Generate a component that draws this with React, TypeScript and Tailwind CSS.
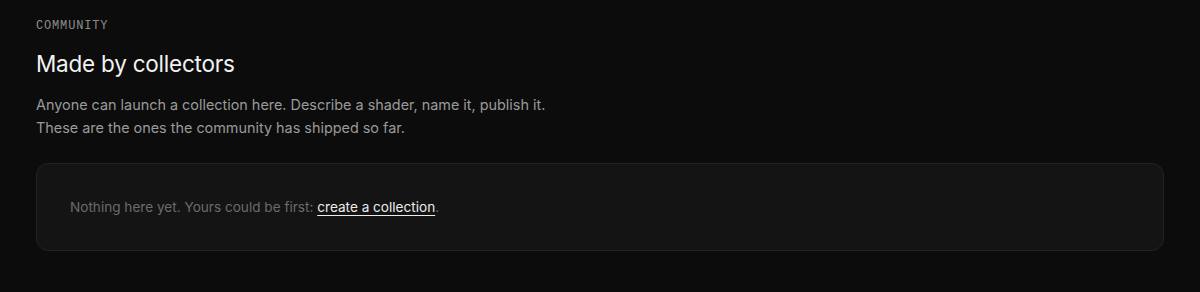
import React from 'react';

function App() {
  return (
    <div className="min-h-[292px] w-full bg-[#0c0c0c] px-9 pt-[20px] pb-10" style={{ fontFamily: 'Inter, "Noto Sans", sans-serif' }}>
      <p className="text-[12px] leading-[13px] tracking-[0.07em] text-[#8c8c8c]" style={{ fontFamily: '"Liberation Mono", "DejaVu Sans Mono", monospace' }}>
        COMMUNITY
      </p>
      <h2 className="mt-[17px] text-[22.5px] leading-[28px] font-normal tracking-[-0.01em] text-[#f2f2f2]">Made by collectors</h2>
      <div className="mt-[15px] text-[14.4px] leading-[23px] text-[#9a9a9a]">
        <p>Anyone can launch a collection here. Describe a shader, name it, publish it.</p>
        <p>These are the ones the community has shipped so far.</p>
      </div>
      <div className="mt-6 flex h-[88px] items-center rounded-xl border border-[#232323] bg-[#141414] px-[33px]">
        <p className="text-[13.6px] text-[#6b6b6b]">
          Nothing here yet. Yours could be first:{' '}
          <a href="#" className="text-[#ececec] underline underline-offset-[3px]">create a collection</a>.
        </p>
      </div>
    </div>
  );
}

export default App;
